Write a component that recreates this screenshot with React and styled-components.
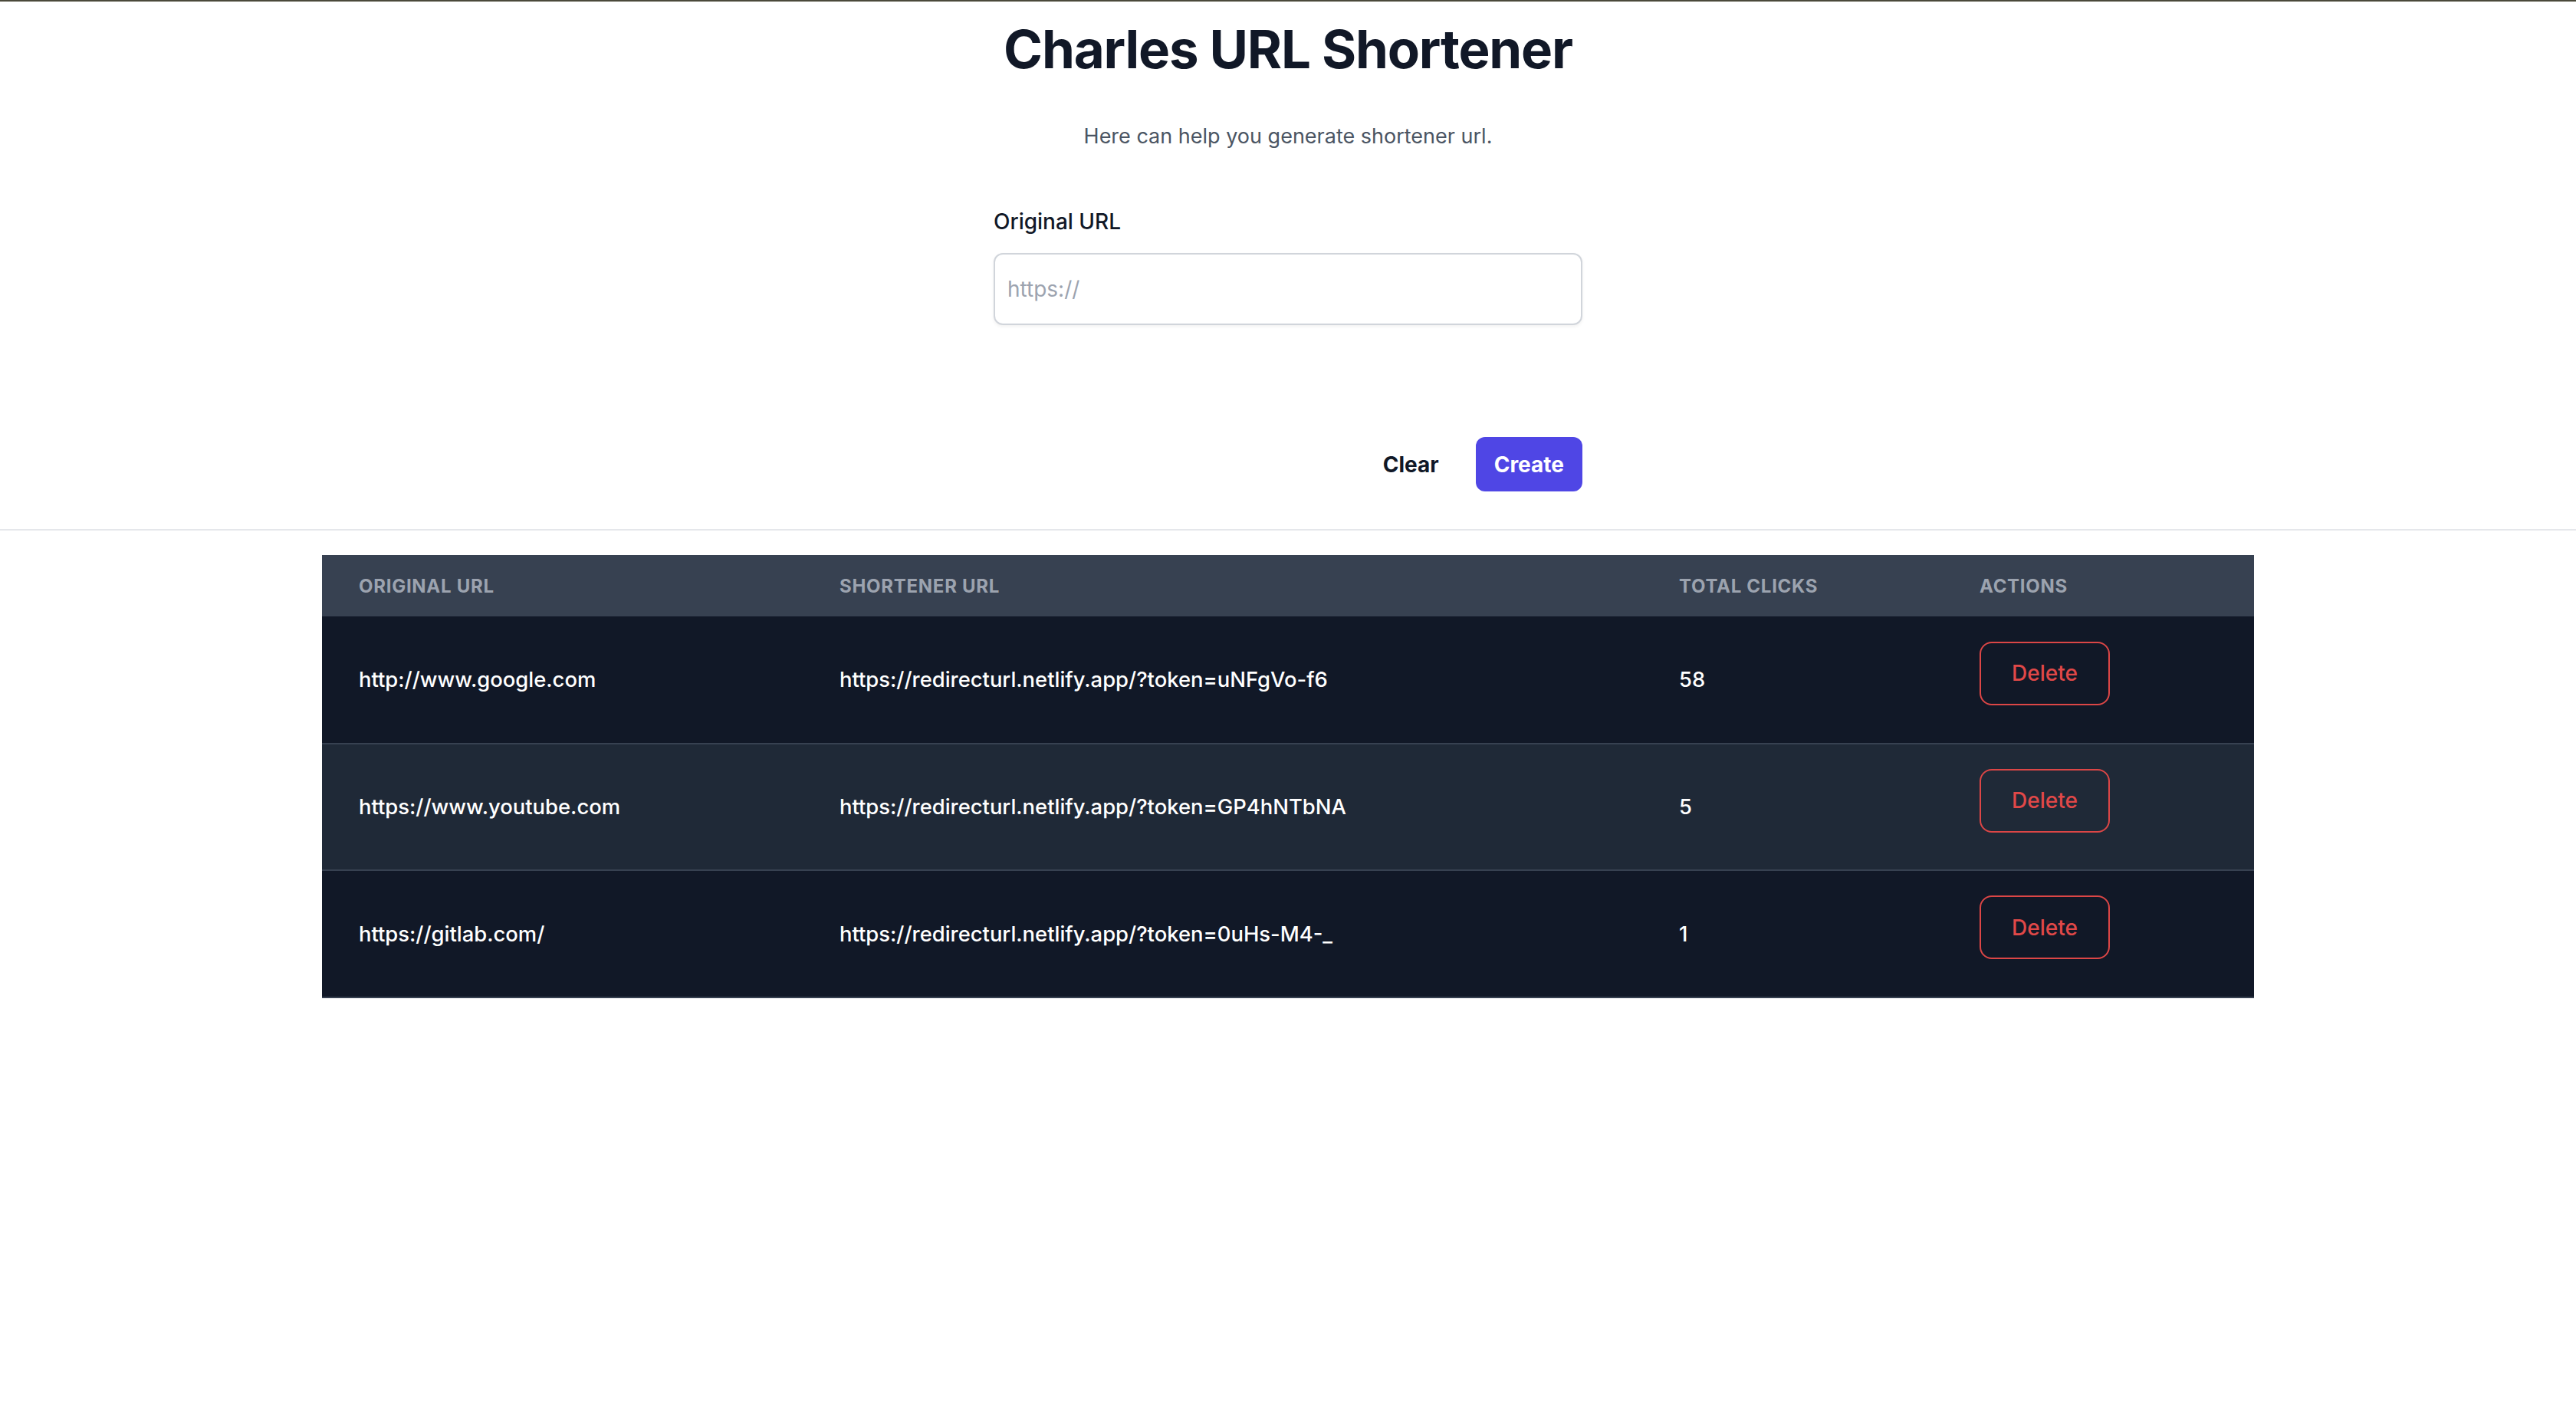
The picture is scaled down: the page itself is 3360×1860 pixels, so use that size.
import React, {useState} from "react";
import styled, {createGlobalStyle} from "styled-components";

const GlobalStyle = createGlobalStyle`
    html, body {
        margin: 0;
        padding: 0;
        background: #ffffff;
    }

    body {
        font-family: Inter, "Noto Sans", "Liberation Sans", sans-serif;
        color: #111827;
        -webkit-font-smoothing: antialiased;
    }

    * {
        box-sizing: border-box;
    }
`;

const Page = styled.div`
    min-height: 1860px;
    border-top: 2px solid #4b4a3b;
`;

const Hero = styled.section`
    display: flex;
    flex-direction: column;
    align-items: center;

    padding-top: 22px;
`;

const Title = styled.h1`
    margin: 0;

    font-size: 69px;
    line-height: 80px;
    font-weight: 700;
    letter-spacing: -1.2px;
    color: #111827;
`;

const Subtitle = styled.p`
    margin: 54px 0 0;

    font-size: 27px;
    line-height: 40px;
    color: #4b5563;
`;

const Form = styled.form`
    display: flex;
    flex-direction: column;

    margin-top: 71px;
    width: 768px;
`;

const Label = styled.label`
    font-size: 28px;
    line-height: 40px;
    font-weight: 500;
    color: #111827;
`;

const Input = styled.input`
    margin-top: 21px;
    height: 94px;
    padding: 0 16px;

    border: 2px solid #d1d5db;
    border-radius: 12px;
    box-shadow: 0 2px 4px rgba(0, 0, 0, 0.06);

    font-family: inherit;
    font-size: 28px;
    color: #111827;
    outline: none;

    &::placeholder {
        color: #9ca3af;
    }
`;

const Actions = styled.div`
    display: flex;
    justify-content: flex-end;
    align-items: center;
    gap: 20px;

    margin-top: 146px;
`;

const Button = styled.button`
    height: 71px;
    padding: 0 ${({primary}) => (primary ? "24px" : "28px")};

    border: none;
    border-radius: 12px;
    background: ${({primary}) => (primary ? "#4f46e5" : "transparent")};

    font-family: inherit;
    font-size: 28px;
    font-weight: 700;
    color: ${({primary}) => (primary ? "#ffffff" : "#111827")};
    cursor: pointer;
`;

const Divider = styled.hr`
    margin: 49px 0 0;
    height: 2px;

    border: none;
    background: #e5e7eb;
`;

const TableWrap = styled.div`
    margin: 32px auto 0;
    width: 2520px;
`;

const Table = styled.table`
    width: 100%;
    border-collapse: collapse;
    table-layout: fixed;
`;

const HeadCell = styled.th`
    height: 80px;
    padding: 0 48px;

    background: #374151;

    text-align: left;
    font-size: 24px;
    font-weight: 700;
    letter-spacing: 0.03em;
    text-transform: uppercase;
    color: #9ca3af;
`;

const Row = styled.tr`
    background: ${({striped}) => (striped ? "#1f2937" : "#111827")};
    border-bottom: 2px solid #374151;
`;

const Cell = styled.td`
    height: 165.5px;
    padding: 0 48px;

    font-size: 27.4px;
    font-weight: 500;
    color: #ffffff;
    white-space: nowrap;
`;

const DeleteButton = styled.button`
    width: 170px;
    height: 83px;
    margin-bottom: 16px;

    border: 2px solid #dc4646;
    border-radius: 16px;
    background: transparent;

    font-family: inherit;
    font-size: 28px;
    font-weight: 500;
    color: #e04848;
    cursor: pointer;
`;

const initialLinks = [
    {original: "http://www.google.com", token: "uNFgVo-f6", clicks: 58},
    {original: "https://www.youtube.com", token: "GP4hNTbNA", clicks: 5},
    {original: "https://gitlab.com/", token: "0uHs-M4-_", clicks: 1}
];

export default function App() {
    const [url, setUrl] = useState("");
    const [links, setLinks] = useState(initialLinks);

    return (
        <Page>
            <GlobalStyle/>
            <Hero>
                <Title>Charles URL Shortener</Title>
                <Subtitle>Here can help you generate shortener url.</Subtitle>
                <Form onSubmit={(event) => event.preventDefault()}>
                    <Label htmlFor="original-url">Original URL</Label>
                    <Input
                        id="original-url"
                        placeholder="https://"
                        value={url}
                        onChange={(event) => setUrl(event.target.value)}/>
                    <Actions>
                        <Button type="button" onClick={() => setUrl("")}>Clear</Button>
                        <Button type="submit" primary>Create</Button>
                    </Actions>
                </Form>
            </Hero>
            <Divider/>
            <TableWrap>
                <Table>
                    <colgroup>
                        <col style={{width: 627}}/>
                        <col style={{width: 1095}}/>
                        <col style={{width: 392}}/>
                        <col/>
                    </colgroup>
                    <thead>
                        <tr>
                            <HeadCell>Original URL</HeadCell>
                            <HeadCell>Shortener URL</HeadCell>
                            <HeadCell>Total Clicks</HeadCell>
                            <HeadCell>Actions</HeadCell>
                        </tr>
                    </thead>
                    <tbody>
                        {links.map((link, index) => (
                            <Row key={link.token} striped={index % 2 === 1}>
                                <Cell>{link.original}</Cell>
                                <Cell>{`https://redirecturl.netlify.app/?token=${link.token}`}</Cell>
                                <Cell>{link.clicks}</Cell>
                                <Cell>
                                    <DeleteButton
                                        onClick={() => setLinks(links.filter(({token}) => token !== link.token))}>
                                        Delete
                                    </DeleteButton>
                                </Cell>
                            </Row>
                        ))}
                    </tbody>
                </Table>
            </TableWrap>
        </Page>
    );
}
